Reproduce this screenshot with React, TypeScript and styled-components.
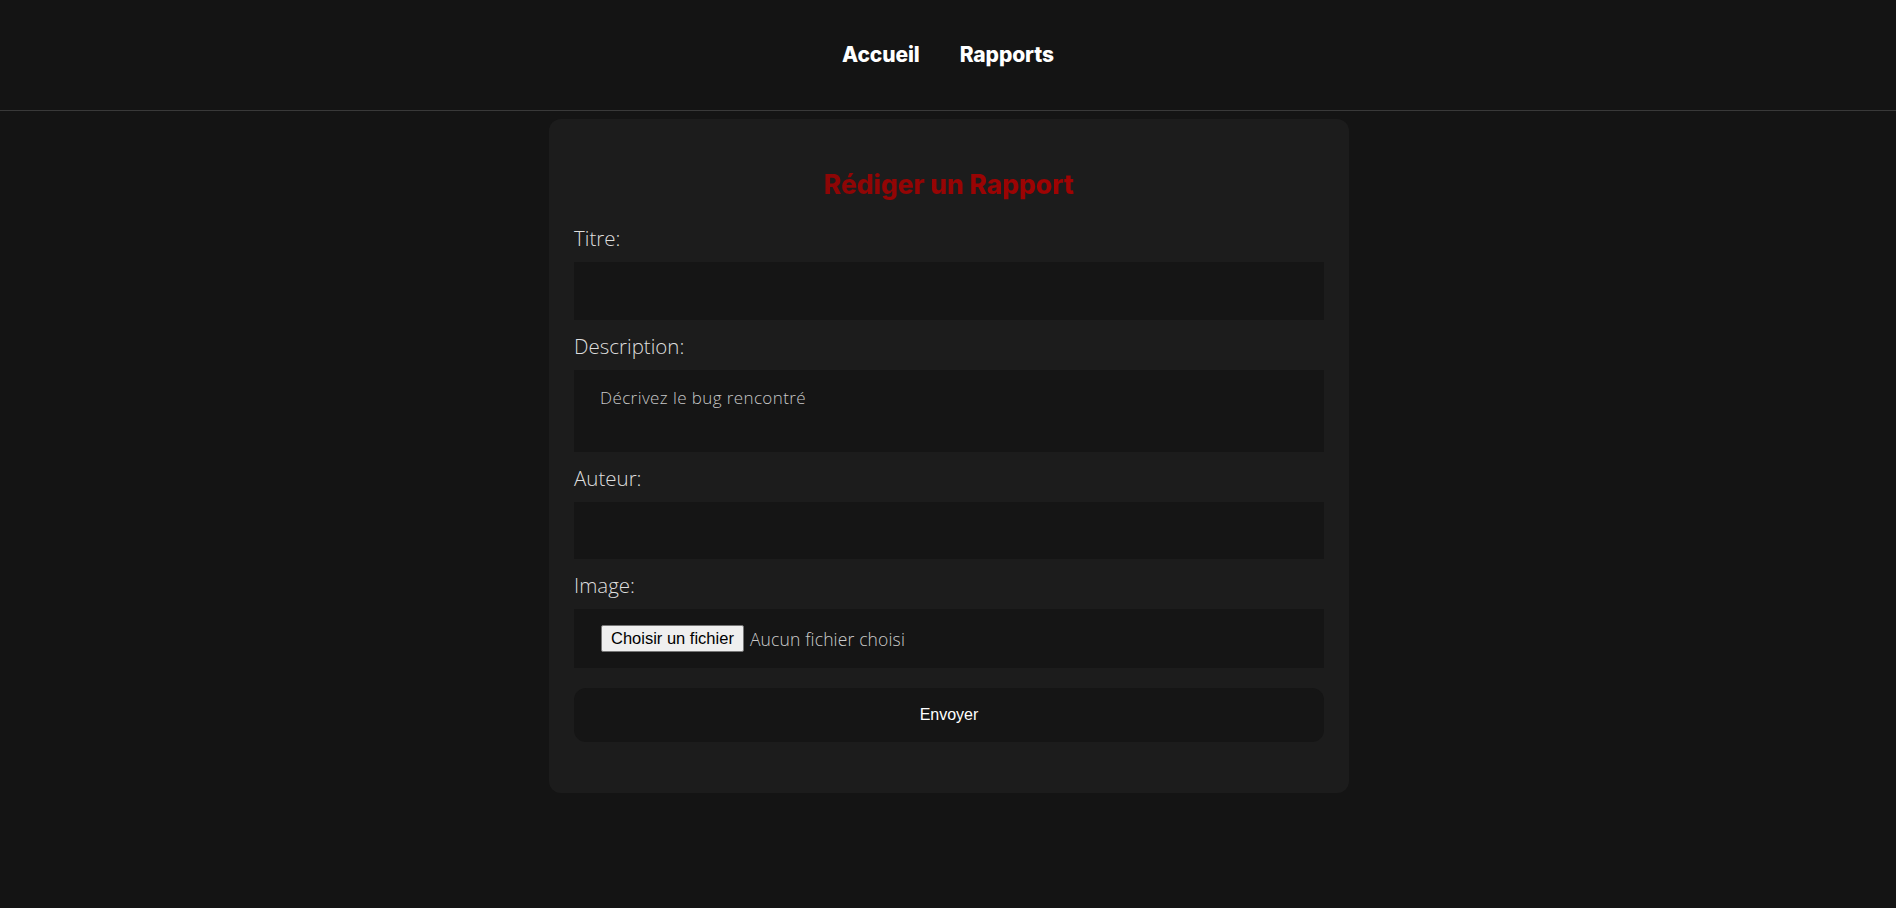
import React from "react";
import styled, { createGlobalStyle } from "styled-components";

const GlobalStyle = createGlobalStyle`
  html, body {
    margin: 0;
    padding: 0;
    background: #141414;
  }
  body {
    font-family: Inter, "Noto Sans", sans-serif;
    color: #e6e6e6;
  }
  * { box-sizing: border-box; }
`;

const Page = styled.div`
  min-height: 100vh;
  background: #141414;
`;

const Header = styled.header`
  height: 111px;
  border-bottom: 1px solid #393939;
  display: flex;
  align-items: center;
  justify-content: center;
`;

const Nav = styled.nav`
  display: flex;
  gap: 40px;
  padding-bottom: 1px;
`;

const NavLink = styled.a`
  font-family: Inter, sans-serif;
  font-weight: 800;
  font-size: 21px;
  line-height: 26px;
  color: #ffffff;
  text-decoration: none;
  letter-spacing: -0.1px;
  cursor: pointer;
`;

const Main = styled.main`
  padding: 8px 0 0 2px;
  display: flex;
  justify-content: center;
`;

const Card = styled.section`
  width: 800px;
  background: #1c1c1c;
  border-radius: 12px;
  padding: 25px 25px 51px;
`;

const Title = styled.h1`
  margin: 24px 0 24px;
  text-align: center;
  font-family: Inter, sans-serif;
  font-weight: 800;
  font-size: 26.5px;
  line-height: 32px;
  letter-spacing: -0.1px;
  background: linear-gradient(90deg, #780909 0%, #9a0404 55%, #b00000 100%);
  -webkit-background-clip: text;
  background-clip: text;
  color: transparent;
`;

const Form = styled.form`
  display: flex;
  flex-direction: column;
`;

const Field = styled.div`
  display: flex;
  flex-direction: column;
  margin-bottom: 12px;
`;

const Label = styled.label`
  font-family: "Open Sans", Inter, sans-serif;
  font-weight: 300;
  font-size: 20.5px;
  line-height: 28px;
  color: #dedede;
  margin-bottom: 10px;
  letter-spacing: 0;
`;

const TextInput = styled.input`
  height: 57.5px;
  width: 100%;
  border: none;
  outline: none;
  background: #151515;
  color: #e0e0e0;
  padding: 0 26px;
  font-family: "Open Sans", Inter, sans-serif;
  font-weight: 300;
  font-size: 17px;
`;

const TextArea = styled.textarea`
  height: 82px;
  width: 100%;
  border: none;
  outline: none;
  resize: none;
  background: #151515;
  color: #e0e0e0;
  padding: 17px 26px;
  font-family: "Open Sans", Inter, sans-serif;
  font-weight: 300;
  font-size: 17px;
  line-height: 22px;
  letter-spacing: 0.4px;
  display: block;
  &::placeholder {
    color: #c8c8c8;
    opacity: 1;
  }
`;

const FileBox = styled.div`
  height: 59px;
  background: #151515;
  display: flex;
  align-items: center;
  padding-left: 27px;
  gap: 6px;
`;

const FileButton = styled.label`
  font-family: "Liberation Sans", Arial, sans-serif;
  font-size: 16.5px;
  line-height: 19px;
  color: #000;
  background: #efefef;
  border: 1px solid #767676;
  border-radius: 2px;
  padding: 3px 9px;
  cursor: default;
  input {
    display: none;
  }
`;

const FileName = styled.span`
  font-family: "Open Sans", Inter, sans-serif;
  font-weight: 300;
  font-size: 17.5px;
  color: #cccccc;
  letter-spacing: 0.15px;
`;

const Submit = styled.button`
  margin-top: 8px;
  height: 54px;
  width: 100%;
  border: none;
  border-radius: 12px;
  background: #151515;
  color: #ffffff;
  font-family: "Liberation Sans", Arial, sans-serif;
  font-size: 16px;
  cursor: pointer;
`;

export default function App() {
  return (
    <Page>
      <GlobalStyle />
      <Header>
        <Nav>
          <NavLink href="#">Accueil</NavLink>
          <NavLink href="#">Rapports</NavLink>
        </Nav>
      </Header>
      <Main>
        <Card>
          <Title>Rédiger un Rapport</Title>
          <Form onSubmit={(e) => e.preventDefault()}>
            <Field>
              <Label htmlFor="titre">Titre:</Label>
              <TextInput id="titre" type="text" />
            </Field>
            <Field>
              <Label htmlFor="description">Description:</Label>
              <TextArea id="description" placeholder="Décrivez le bug rencontré" />
            </Field>
            <Field>
              <Label htmlFor="auteur">Auteur:</Label>
              <TextInput id="auteur" type="text" />
            </Field>
            <Field>
              <Label htmlFor="image">Image:</Label>
              <FileBox>
                <FileButton>
                  Choisir un fichier
                  <input id="image" type="file" accept="image/*" />
                </FileButton>
                <FileName>Aucun fichier choisi</FileName>
              </FileBox>
            </Field>
            <Submit type="submit">Envoyer</Submit>
          </Form>
        </Card>
      </Main>
    </Page>
  );
}
